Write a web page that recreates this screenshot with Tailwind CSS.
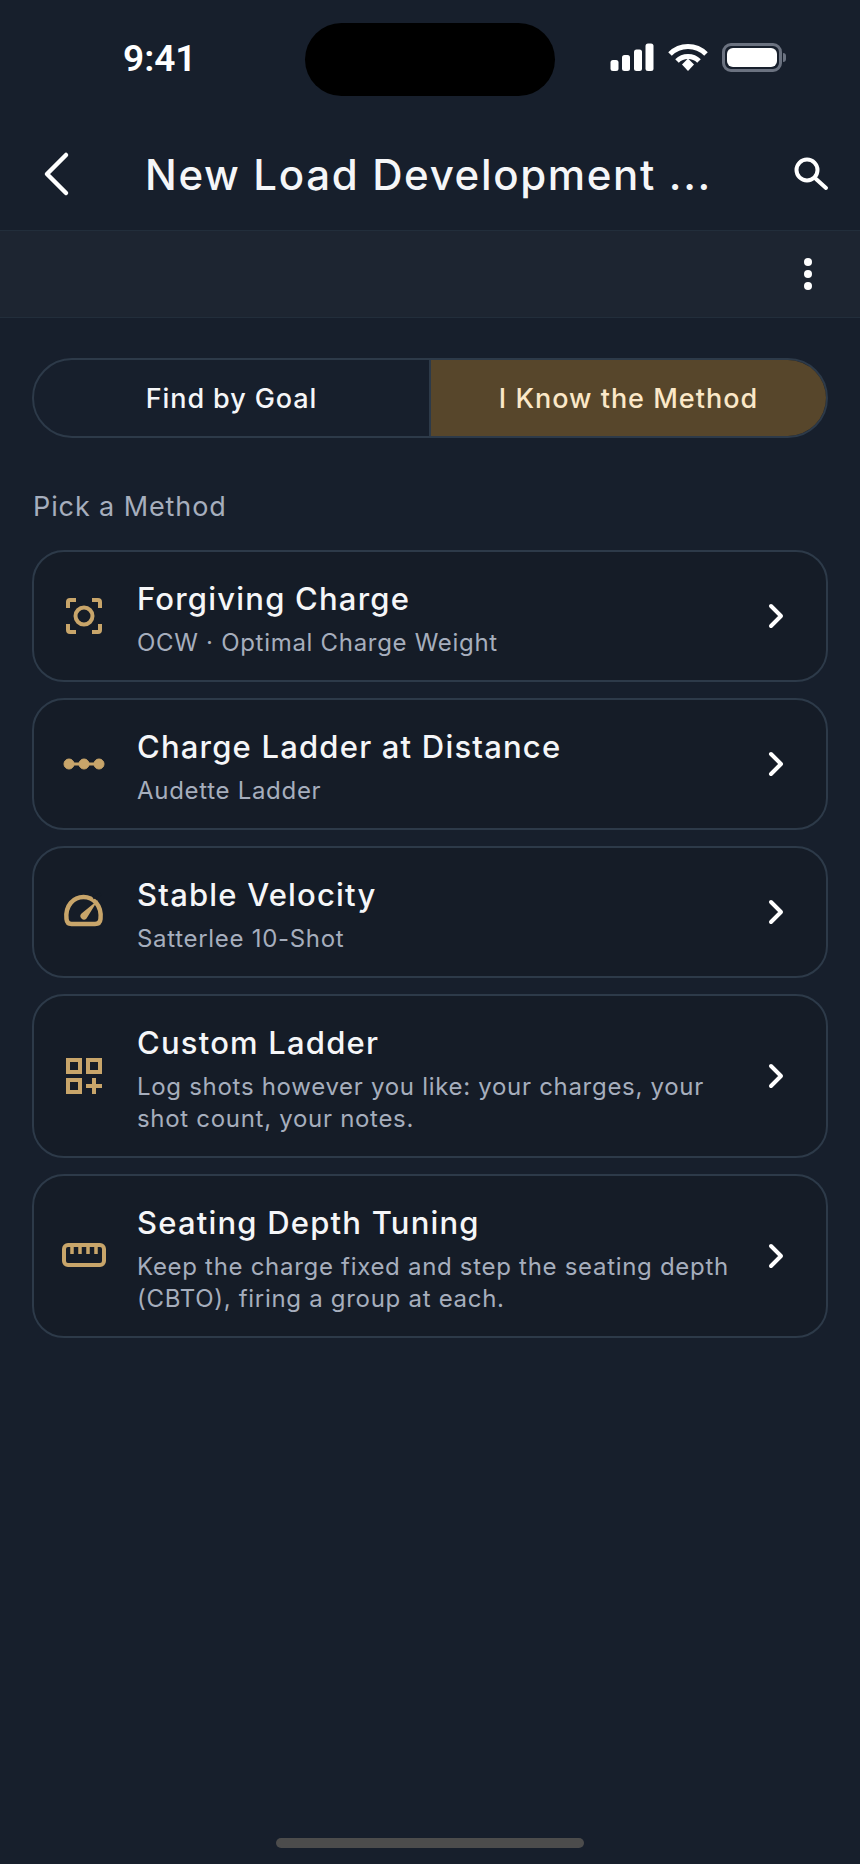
<!DOCTYPE html>
<html lang="en">
<head>
    <meta charset="UTF-8">
    <meta name="viewport" content="width=device-width, initial-scale=1.0">
    <title>New Load Development</title>
    <script src="https://cdn.jsdelivr.net/npm/@tailwindcss/browser@4"></script>
</head>
<body class="bg-[#171f2c] font-['Inter',sans-serif]">
<div class="relative w-[860px] h-[1864px] overflow-hidden bg-[#171f2c] text-white">
    <!-- status bar -->
    <div class="relative h-[132px]">
        <span class="absolute left-[123px] top-[37px] text-[37px] leading-[44px] font-semibold font-['Roboto',sans-serif]">9:41</span>
        <div class="absolute left-[305px] top-[23px] w-[250px] h-[73px] rounded-[37px] bg-black"></div>
        <svg class="absolute left-[610px] top-[43px]" width="44" height="29" viewBox="0 0 44 29" fill="#fff">
            <rect x="0.5" y="17" width="8" height="11" rx="2.5"/><rect x="12" y="12" width="8" height="16" rx="2.5"/><rect x="24" y="6.5" width="8" height="21.5" rx="2.5"/><rect x="35.5" y="0.5" width="8" height="27.5" rx="2.5"/>
        </svg>
        <svg class="absolute left-[668px] top-[43px]" width="40" height="29" viewBox="0 0 40 29" fill="none" stroke="#fff">
            <path d="M2 11 C12 1 28 1 38 11" stroke-width="5"/><path d="M9 18 C15 12 25 12 31 18" stroke-width="5"/><path d="M14 21.5 L20 15.5 L26 21.5 L20 28 Z" fill="#fff" stroke="none"/>
        </svg>
        <div class="absolute left-[722px] top-[43px] w-[60px] h-[29px] rounded-[9px] border-[3px] border-[#6b7280] p-[2px]"><div class="w-full h-full rounded-[6px] bg-white"></div></div>
        <div class="absolute left-[783px] top-[53px] w-[3px] h-[9px] rounded-r-[3px] bg-[#6b7280]"></div>
    </div>
    <!-- app bar -->
    <div class="relative h-[98px]">
        <svg class="absolute left-[41px] top-[19px]" width="32" height="46" viewBox="0 0 32 46" fill="none" stroke="#fff" stroke-width="4.5" stroke-linecap="round" stroke-linejoin="round"><path d="M25 4 L6 23 L25 42"/></svg>
        <h1 class="absolute left-[145px] top-[18px] text-[42px] leading-[50px] font-medium tracking-[1.65px] text-[#f5f6f8] whitespace-nowrap">New Load Development ...</h1>
        <svg class="absolute left-[792px] top-[23px]" width="40" height="40" viewBox="0 0 40 40" fill="none" stroke="#fff" stroke-width="4" stroke-linecap="round"><circle cx="15" cy="15" r="10.5"/><path d="M24 24 L34 33"/></svg>
    </div>
    <!-- sub bar -->
    <div class="relative h-[88px] bg-[#1d2531] border-y border-[#222e3b]">
        <div class="absolute left-[804px] top-[27px] flex flex-col gap-[4px]">
            <span class="w-[8px] h-[8px] rounded-full bg-white"></span>
            <span class="w-[8px] h-[8px] rounded-full bg-white"></span>
            <span class="w-[8px] h-[8px] rounded-full bg-white"></span>
        </div>
    </div>
    <main class="px-[32px] pt-[40px]">
        <!-- segmented -->
        <div class="flex h-[80px] rounded-[40px] border-2 border-[#2d3a49] overflow-hidden">
            <div class="w-[397px] pt-[2px] flex items-center justify-center border-r-2 border-[#2d3a49] text-[27px] font-medium tracking-[0.9px] text-[#f5f6f8]">Find by Goal</div>
            <div class="flex-1 pt-[2px] flex items-center justify-center bg-[#57462b] text-[27px] font-medium tracking-[1px] text-[#fbe8c8]">I Know the Method</div>
        </div>
        <p class="mt-[50px] ml-[1px] text-[27px] leading-[38px] tracking-[0.9px] text-[#a6aebd]">Pick a Method</p>
        <!-- method list -->
        <div class="mt-[24px] flex flex-col gap-[16px]">
            <div class="flex items-center h-[132px] rounded-[32px] border-2 border-[#2d3a49] bg-[#151c27]">
                <div class="w-[99px] mr-[4px] shrink-0 flex justify-center">
                    <svg width="44" height="44" viewBox="0 0 44 44" fill="none" stroke="#c8a56a" stroke-width="4"><circle cx="22" cy="22" r="8.5"/><path d="M6 14 V8 Q6 6 8 6 H14 M30 6 H36 Q38 6 38 8 V14 M38 30 V36 Q38 38 36 38 H30 M14 38 H8 Q6 38 6 36 V30"/></svg>
                </div>
                <div class="flex-1 pt-[5px]">
                    <h2 class="text-[31px] leading-[40px] font-medium tracking-[1.2px] text-[#f5f6f8]">Forgiving Charge</h2>
                    <p class="mt-[8px] text-[24px] leading-[32px] tracking-[0.7px] text-[#a6aebd]">OCW · Optimal Charge Weight</p>
                </div>
                <svg class="mr-[37px]" width="24" height="32" viewBox="0 0 24 32" fill="none" stroke="#fff" stroke-width="4" stroke-linecap="round" stroke-linejoin="round"><path d="M6 6 L16 16 L6 26"/></svg>
            </div>
            <div class="flex items-center h-[132px] rounded-[32px] border-2 border-[#2d3a49] bg-[#151c27]">
                <div class="w-[99px] mr-[4px] shrink-0 flex justify-center">
                    <svg width="44" height="44" viewBox="0 0 44 44" fill="#c8a56a" stroke="#c8a56a"><circle cx="7" cy="22" r="5"/><circle cx="22" cy="22" r="5"/><circle cx="37" cy="22" r="5"/><path d="M7 22 H37" stroke-width="3"/></svg>
                </div>
                <div class="flex-1 pt-[5px]">
                    <h2 class="text-[31px] leading-[40px] font-medium tracking-[1.2px] text-[#f5f6f8]">Charge Ladder at Distance</h2>
                    <p class="mt-[8px] text-[24px] leading-[32px] tracking-[0.7px] text-[#a6aebd]">Audette Ladder</p>
                </div>
                <svg class="mr-[37px]" width="24" height="32" viewBox="0 0 24 32" fill="none" stroke="#fff" stroke-width="4" stroke-linecap="round" stroke-linejoin="round"><path d="M6 6 L16 16 L6 26"/></svg>
            </div>
            <div class="flex items-center h-[132px] rounded-[32px] border-2 border-[#2d3a49] bg-[#151c27]">
                <div class="w-[99px] mr-[4px] shrink-0 flex justify-center">
                    <svg width="44" height="44" viewBox="0 0 44 44" fill="none" stroke="#c8a56a" stroke-width="4.5" stroke-linejoin="round"><path d="M9.5 34 H33 Q38 34 38.5 29 C40 15 31 7 21.5 7 C12 7 3 15 4.5 29 Q5 34 9.5 34 Z"/><path d="M31 8 L39 4" stroke="#151c27" stroke-width="3"/><path d="M19.5 23.5 L36 10 L24.5 28.5 A3.5 3.5 0 0 1 19.5 23.5 Z" fill="#c8a56a" stroke="none"/></svg>
                </div>
                <div class="flex-1 pt-[5px]">
                    <h2 class="text-[31px] leading-[40px] font-medium tracking-[1.2px] text-[#f5f6f8]">Stable Velocity</h2>
                    <p class="mt-[8px] text-[24px] leading-[32px] tracking-[0.7px] text-[#a6aebd]">Satterlee 10-Shot</p>
                </div>
                <svg class="mr-[37px]" width="24" height="32" viewBox="0 0 24 32" fill="none" stroke="#fff" stroke-width="4" stroke-linecap="round" stroke-linejoin="round"><path d="M6 6 L16 16 L6 26"/></svg>
            </div>
            <div class="flex items-center h-[164px] rounded-[32px] border-2 border-[#2d3a49] bg-[#151c27]">
                <div class="w-[99px] mr-[4px] shrink-0 flex justify-center">
                    <svg width="44" height="44" viewBox="0 0 44 44" fill="none" stroke="#c8a56a" stroke-width="4"><rect x="6" y="6" width="12" height="12"/><rect x="26" y="6" width="12" height="12"/><rect x="6" y="26" width="12" height="12"/><path d="M24 32 H40 M32 24 V40"/></svg>
                </div>
                <div class="flex-1 pt-[5px]">
                    <h2 class="text-[31px] leading-[40px] font-medium tracking-[1.2px] text-[#f5f6f8]">Custom Ladder</h2>
                    <p class="mt-[8px] text-[24px] leading-[32px] tracking-[0.7px] text-[#a6aebd]">Log shots however you like: your charges, your<br>shot count, your notes.</p>
                </div>
                <svg class="mr-[37px]" width="24" height="32" viewBox="0 0 24 32" fill="none" stroke="#fff" stroke-width="4" stroke-linecap="round" stroke-linejoin="round"><path d="M6 6 L16 16 L6 26"/></svg>
            </div>
            <div class="flex items-center h-[164px] rounded-[32px] border-2 border-[#2d3a49] bg-[#151c27]">
                <div class="w-[99px] mr-[4px] shrink-0 flex justify-center">
                    <svg width="44" height="44" viewBox="0 0 44 44" fill="none" stroke="#c8a56a" stroke-width="4"><rect x="2" y="11" width="40" height="20" rx="4"/><path d="M10 12 V20 M18 12 V20 M26 12 V20 M34 12 V20" stroke-width="3.5"/></svg>
                </div>
                <div class="flex-1 pt-[5px]">
                    <h2 class="text-[31px] leading-[40px] font-medium tracking-[1.2px] text-[#f5f6f8]">Seating Depth Tuning</h2>
                    <p class="mt-[8px] text-[24px] leading-[32px] tracking-[0.7px] text-[#a6aebd]">Keep the charge fixed and step the seating depth<br>(CBTO), firing a group at each.</p>
                </div>
                <svg class="mr-[37px]" width="24" height="32" viewBox="0 0 24 32" fill="none" stroke="#fff" stroke-width="4" stroke-linecap="round" stroke-linejoin="round"><path d="M6 6 L16 16 L6 26"/></svg>
            </div>
        </div>
    </main>
    <!-- home indicator -->
    <div class="absolute left-[276px] top-[1838px] w-[308px] h-[10px] rounded-full bg-[#4c4c4c]"></div>
</div>
</body>
</html>
